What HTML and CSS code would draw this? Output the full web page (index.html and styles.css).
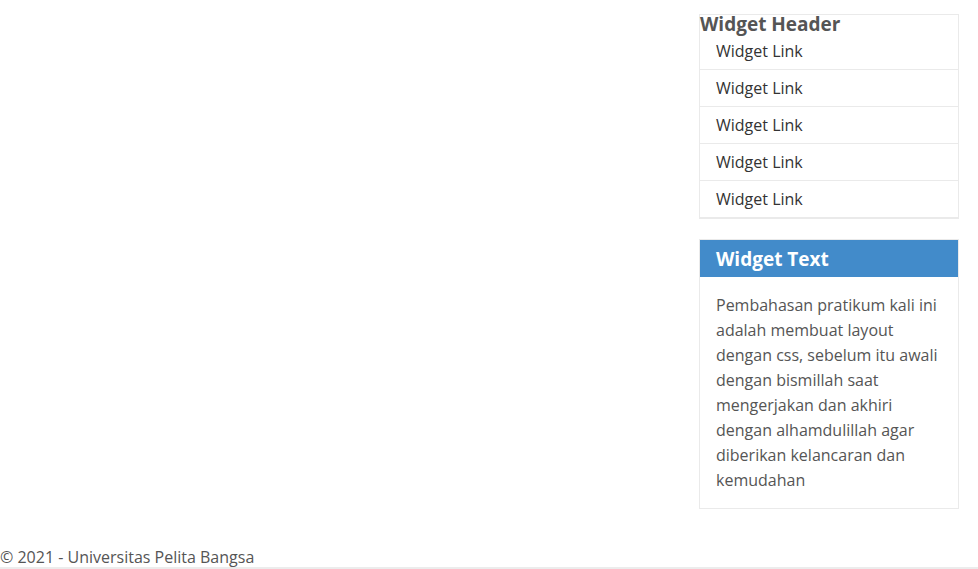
FILE: index.html
```html
<!DOCTYPE html>
<html>
<head>
<meta charset="utf-8">
<title>Layout</title>
<link rel="stylesheet" href="styles.css">
</head>
<body>
<div class="wrapper">
  <main class="content"></main>
  <aside class="sidebar">
    <div class="widget-box">
      <h3 class="widget-header">Widget Header</h3>
      <ul class="widget-list">
        <li><a href="#">Widget Link</a></li>
        <li><a href="#">Widget Link</a></li>
        <li><a href="#">Widget Link</a></li>
        <li><a href="#">Widget Link</a></li>
        <li><a href="#">Widget Link</a></li>
      </ul>
    </div>
    <div class="widget-box">
      <h3 class="title">Widget Text</h3>
      <p class="widget-text">Pembahasan pratikum kali ini adalah membuat layout dengan css, sebelum itu awali dengan bismillah saat mengerjakan dan akhiri dengan alhamdulillah agar diberikan kelancaran dan kemudahan</p>
    </div>
  </aside>
</div>
<footer class="footer">
  <p class="footer-text">&copy; 2021 - Universitas Pelita Bangsa</p>
  <div class="footer-bar"></div>
</footer>
</body>
</html>
```

FILE: styles.css
```css
* { box-sizing: border-box; }
body {
  margin: 0;
  font-family: "Open Sans", "DejaVu Sans", sans-serif;
  color: #555;
  background: #fff;
}
.wrapper {
  display: flex;
  justify-content: space-between;
  padding: 14px 19px 0 0;
}
.content { flex: 1; }
.sidebar {
  width: 260px;
  display: flex;
  flex-direction: column;
  gap: 20px;
}
.widget-box {
  border: 1px solid #eaeaea;
}
.widget-header {
  margin: 0;
  font-size: 19px;
  line-height: 18px;
  font-weight: 700;
  color: #555;
}
.widget-list {
  list-style: none;
  margin: 0;
  padding: 0;
}
.widget-list li {
  border-bottom: 1px solid #eaeaea;
}
.widget-list a {
  display: block;
  padding: 7px 16px;
  font-size: 16px;
  line-height: 22px;
  color: #333;
  text-decoration: none;
}
.title {
  margin: 0;
  padding: 6px 16px 4px;
  background: #428bca;
  color: #fff;
  font-size: 19px;
  line-height: 27px;
  font-weight: 700;
}
.widget-text {
  margin: 0;
  padding: 16px 16px 15px;
  font-size: 16px;
  line-height: 25px;
  color: #555;
}
.footer {
  margin-top: 38px;
}
.footer-text {
  margin: 0;
  font-size: 16px;
  line-height: 20px;
  color: #555;
}
.footer-bar {
  height: 3px;
  background: #ececec;
}
```
